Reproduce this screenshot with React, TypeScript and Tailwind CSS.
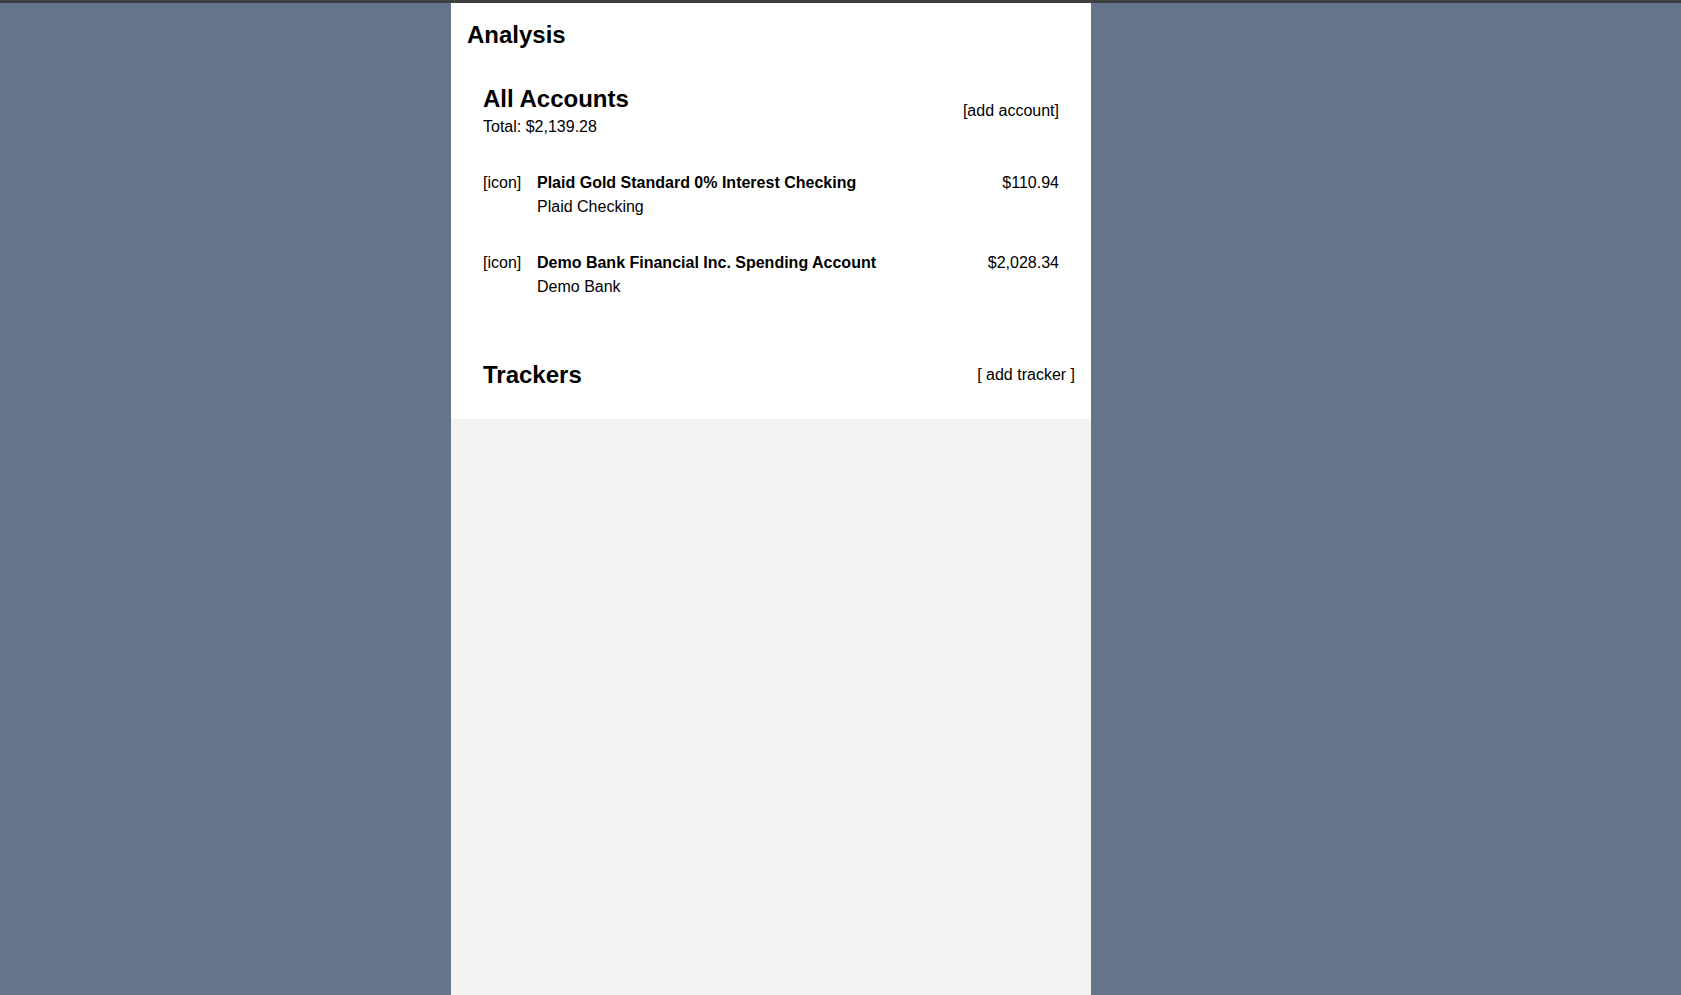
const accounts = [
  { name: "Plaid Gold Standard 0% Interest Checking", sub: "Plaid Checking", amount: "$110.94" },
  { name: "Demo Bank Financial Inc. Spending Account", sub: "Demo Bank", amount: "$2,028.34" },
];

export default function App() {
  return (
    <div
      className="flex min-h-screen flex-col border-t-[3px] border-[#3f3f3f] bg-[#64748b] text-black"
      style={{ fontFamily: '"Liberation Sans", Arial, sans-serif' }}
    >
      <div className="ml-[451px] flex w-[640px] flex-1 flex-col bg-[#f3f4f1]">
        <div className="bg-white pb-7">
          <h1 className="px-4 pt-4 text-2xl font-bold leading-8">Analysis</h1>

          <section className="mt-8 px-8">
            <div className="flex items-center justify-between">
              <div>
                <h2 className="text-2xl font-bold leading-8">All Accounts</h2>
                <div className="text-base leading-6">Total: $2,139.28</div>
              </div>
              <button type="button" className="text-base leading-6">
                [add account]
              </button>
            </div>

            <ul className="mt-8 flex flex-col gap-8">
              {accounts.map((a) => (
                <li key={a.name} className="flex items-start text-base leading-6">
                  <span className="w-[54px] shrink-0">[icon]</span>
                  <div className="flex-1">
                    <div className="font-bold">{a.name}</div>
                    <div>{a.sub}</div>
                  </div>
                  <span>{a.amount}</span>
                </li>
              ))}
            </ul>
          </section>

          <section className="mt-[60px] flex items-center justify-between pl-8 pr-4">
            <h2 className="text-2xl font-bold leading-8">Trackers</h2>
            <button type="button" className="text-base leading-6">
              [ add tracker ]
            </button>
          </section>
        </div>
      </div>
    </div>
  );
}
